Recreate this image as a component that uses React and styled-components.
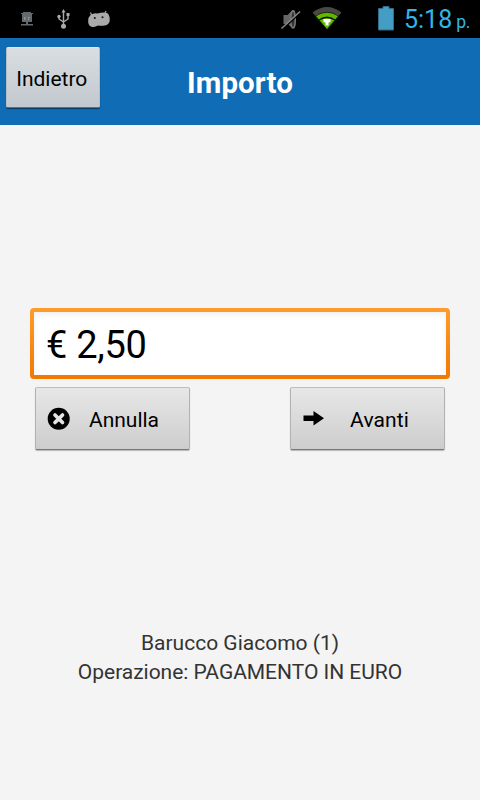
import React from 'react';
import styled, { createGlobalStyle } from 'styled-components';

const GlobalStyle = createGlobalStyle`
    body {
        margin: 0;
        background-color: #f4f4f4;
        font-family: Roboto, sans-serif;
    }
    * {
        box-sizing: border-box;
    }
`;

const Screen = styled.div`
    width: 480px;
    height: 800px;
    display: flex;
    flex-direction: column;
    overflow: hidden;
    background-color: #f4f4f4;
`;

const StatusBar = styled.div`
    flex: none;
    height: 38px;
    display: flex;
    justify-content: space-between;
    background-color: #000;
    svg {
        display: block;
    }
`;

const Clock = styled.div`
    display: flex;
    align-items: baseline;
    width: 76px;
    height: 38px;
    line-height: 38px;
    padding-top: 1px;
    font-size: 25px;
    color: #33b5e5;
    white-space: nowrap;
`;

const Meridiem = styled.span`
    margin-left: 4px;
    font-size: 17.5px;
    letter-spacing: -0.3px;
`;

const StatusGroup = styled.div`
    display: flex;
`;

const Header = styled.header`
    flex: 0 0 87px;
    display: grid;
    grid-template-columns: 94px 1fr 94px;
    padding: 8px 6px 0;
    background-color: #116cb6;
`;

const Title = styled.h1`
    margin: 0;
    padding-top: 1px;
    text-align: center;
    line-height: 72px;
    font-size: 29.5px;
    font-weight: bold;
    letter-spacing: 0.1px;
    color: #fff;
`;

const Button = styled.button`
    display: flex;
    align-items: center;
    width: ${props => props.$width};
    height: ${props => props.$blue ? '61px' : '63px'};
    margin-top: ${props => props.$blue ? '1px' : '0'};
    padding: 0 0 1px;
    border: 1px solid;
    border-color: ${props => props.$blue ? '#e2e7eb #b5bfc8 #66717a' : '#bebebe #b2b2b2 #777'};
    border-radius: 2px;
    background: ${props => props.$blue
        ? 'linear-gradient(#d9dee2, #c2c8cd)'
        : 'linear-gradient(#e7e7e7, #cdcdcd)'};
    box-shadow: 0 1px 1px ${props => props.$blue ? 'rgba(0, 20, 40, 0.6)' : 'rgba(0, 0, 0, 0.25)'};
    font-family: inherit;
    font-size: 21px;
    color: #000;
    svg {
        flex: none;
    }
`;

const Label = styled.span`
    flex: 1;
    text-align: center;
    white-space: nowrap;
    padding-top: 4px;
    padding-right: ${props => props.$right || 0};
    letter-spacing: ${props => props.$spacing || 0};
`;

const Main = styled.main`
    flex: 1;
    display: flex;
    flex-direction: column;
    padding: 183px 30px 0;
`;

const AmountField = styled.div`
    padding: 4px;
    height: 71px;
    border-radius: 4px;
    background: linear-gradient(#ff9c2b, #f27800);
`;

const Amount = styled.input`
    display: block;
    width: 100%;
    height: 63px;
    padding: 2px 0 0 12px;
    border: 0;
    outline: 0;
    background-color: #fff;
    box-shadow: inset 0 3px 6px #f1f1f1;
    font-family: inherit;
    font-size: 38px;
    letter-spacing: -0.3px;
    color: #000;
`;

const Actions = styled.div`
    display: flex;
    justify-content: space-between;
    padding: 8px 5px 0;
`;

const Summary = styled.div`
    padding-top: 179px;
    text-align: center;
    font-size: 21px;
    line-height: 29px;
    color: #333;
`;

const Line = styled.div`
    white-space: nowrap;
    letter-spacing: ${props => props.$spacing || 0};
`;

const NotificationIcons = () => (
    <svg width="120" height="38" viewBox="0 0 120 38">
        <g fill="#64696d">
            <path d="M23 12h8v1h2v1H21v-1h2z" />
            <path d="M22 14h10v8H22z" />
            <path d="M26 22h2v2h5v1.500H21V24h5z" />
            <path d="M24 17h1.500v3H24zM28 17h2v1h-1v2h-1z" fill="#8c9094" />
        </g>
        <g fill="none" stroke="#aaa" strokeWidth="1.4">
            <path d="M63.5 12v14M59 16v3l4.500 3M68 15v4l-4.500 3" />
            <circle cx="63.500" cy="26.300" r="2.500" fill="#aaa" stroke="none" />
            <circle cx="59" cy="16.500" r="1.700" fill="#aaa" stroke="none" />
            <path d="M66.500 13h3v3h-3zM61.500 12.500l2-3.500 2 3.500z" fill="#aaa" stroke="none" />
        </g>
        <path d="M90.500 12.500l1.500 3.500M106 11l-1.500 3.500" stroke="#aaa" strokeWidth="1.200" />
        <path d="M90.500 15q3.500-2.500 7-1.500 7-2 10.500 0 3 5 1 9.500-2 3-6 2.800-3 .2-5-.3-3 2-6.500 1.200-3.500-1.200-3.300-5.700 0-4 2.300-6z" fill="#aaa" />
        <circle cx="94.800" cy="18" r="1" fill="#111" />
        <circle cx="102.500" cy="17.300" r="1" fill="#111" />
    </svg>
);

const SystemIcons = () => (
    <svg width="128" height="38" viewBox="276 0 128 38">
        <path d="M283.500 15h4l5-5h2v18h-2l-5-4h-4z" fill="#666" />
        <ellipse cx="293" cy="19.500" rx="2.300" ry="8.500" fill="#333" stroke="#777" strokeWidth="1.500" />
        <path d="M282.500 29.500l18-17" stroke="#000" strokeWidth="1.500" />
        <path d="M281.500 28.500l18.500-17" stroke="#888" strokeWidth="1.500" />
        <path d="M327 29.500l-14.500-17q14.500-11 29 0z" fill="#484848" />
        <path d="M327 29.500l-11.500-13.500q11.500-7.500 23 0z" fill="#60b800" stroke="#000" strokeWidth=".7" />
        <path d="M319 20q8-5.500 16 0" fill="none" stroke="#111" strokeWidth="1.300" />
        <path d="M323.500 19h7v3l-2 .5v3h-3v-3l-2-.5z" fill="#fff" />
        <path d="M383 6.500h6v2h4.500v21.500h-15V8.500h4.500z" fill="#439dc5" stroke="#316c84" />
    </svg>
);

const CancelIcon = () => (
    <svg width="24" height="25" viewBox="0 0 24 25" style={{ marginLeft: 11 }}>
        <circle cx="11.700" cy="12.700" r="11" fill="#000" />
        <path d="M8 9l7.500 7.500M15.500 9L8 16.500" stroke="#e4e4e4" strokeWidth="3.700" strokeLinecap="round" />
    </svg>
);

const ArrowIcon = () => (
    <svg width="22" height="18" viewBox="0 0 22 18" style={{ marginLeft: 12 }}>
        <path d="M.500 6.500h10V2L21 9.300l-10.500 7.200V12H.500z" fill="#000" />
    </svg>
);

const App = () => {
    return (
        <>
            <GlobalStyle />
            <Screen>
                <StatusBar>
                    <NotificationIcons />
                    <StatusGroup>
                        <SystemIcons />
                        <Clock>5:18<Meridiem>p.</Meridiem></Clock>
                    </StatusGroup>
                </StatusBar>
                <Header>
                    <Button $blue $width="93.5px"><Label $right="2px">Indietro</Label></Button>
                    <Title>Importo</Title>
                </Header>
                <Main>
                    <AmountField>
                        <Amount defaultValue="€ 2,50" aria-label="Importo" />
                    </AmountField>
                    <Actions>
                        <Button $width="155px">
                            <CancelIcon />
                            <Label $right="12px">Annulla</Label>
                        </Button>
                        <Button $width="155px">
                            <ArrowIcon />
                            <Label $right="10px" $spacing="0.1px">Avanti</Label>
                        </Button>
                    </Actions>
                    <Summary>
                        <Line>Barucco Giacomo (1)</Line>
                        <Line $spacing="-0.03px">Operazione: PAGAMENTO IN EURO</Line>
                    </Summary>
                </Main>
            </Screen>
        </>
    );
}

export default App;
